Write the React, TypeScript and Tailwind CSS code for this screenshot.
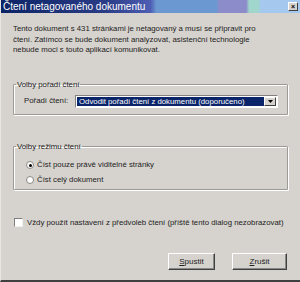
import React from "react";

const font = { fontFamily: '"Liberation Sans", "DejaVu Sans", sans-serif' };

function GroupBox({ title, children, className }: { title: string; children: React.ReactNode; className?: string }) {
  return (
    <fieldset className={"border border-[#9c9a94] shadow-[inset_1px_1px_0_#fff,1px_1px_0_#fff] rounded-[1px] mx-[12px] " + (className ?? "")}>
      <legend className="ml-[2px] px-[1px] text-[7.8px] leading-[9px] text-[#222]">{title}</legend>
      {children}
    </fieldset>
  );
}

function Radio({ checked, label }: { checked?: boolean; label: string }) {
  return (
    <div className="flex items-center gap-[3px] h-[15px]">
      <span className="w-[8px] h-[8px] rounded-full bg-white border border-[#8a8884] flex items-center justify-center">
        {checked && <span className="w-[3px] h-[3px] rounded-full bg-black" />}
      </span>
      <span className="text-[7.8px] text-[#222]">{label}</span>
    </div>
  );
}

function Button({ label }: { label: string }) {
  return (
    <button className="h-[17px] border border-t-white border-l-white border-r-[#404040] border-b-[#404040] shadow-[inset_-1px_-1px_0_#888] bg-[#d6d3ce] text-[8px] text-[#222]">
      <span className="underline">{label[0]}</span>
      {label.slice(1)}
    </button>
  );
}

export default function App() {
  return (
    <div style={font} className="w-[300px] h-[282px] bg-[#d6d3ce] flex flex-col border-l border-l-[#e8e6e2] border-b-2 border-b-[#404040] overflow-hidden">
      <div className="h-[13px] shrink-0 flex items-center justify-between pl-[2px] pr-[2px] bg-[linear-gradient(to_right,#0b2466_0%,#2a3c86_35%,#4e5eb4_50%,#6b98d0_52%,#6b98d0_72%,#8c8cca_73%,#8c8cca_82%,#a0d6cc_83%,#a0d6cc_86%,#a4c8ee_87%,#a4c8ee_100%)]">
        <span className="text-white text-[10px] leading-[12px]">Čtení netagovaného dokumentu</span>
        <span className="w-[10px] h-[9px] bg-[#d6d3ce] border border-t-white border-l-white border-r-[#404040] border-b-[#404040] flex items-center justify-center text-[7px] leading-none font-bold text-black">
          ×
        </span>
      </div>

      <p className="mt-[11px] pl-[12px] pr-[30px] text-[7.8px] leading-[10.5px] text-[#222]">
        Tento dokument s 431 stránkami je netagovaný a musí se připravit pro čtení. Zatímco se bude dokument analyzovat, asistenční technologie nebude moci s touto aplikací komunikovat.
      </p>

      <GroupBox title="Volby pořadí čtení" className="mt-[24px] h-[35px] shrink-0">
        <div className="flex items-center pl-[10px] pt-[6px]">
          <span className="w-[51px] text-[7.8px] text-[#222]">Pořadí čtení:</span>
          <div className="w-[203px] h-[13px] bg-white border border-t-[#808080] border-l-[#808080] border-r-white border-b-white flex items-stretch p-[1px]">
            <div className="flex-1 bg-[#0a246a] text-white text-[7.8px] leading-[9px] pl-[2px]">
              Odvodit pořadí čtení z dokumentu (doporučeno)
            </div>
            <div className="w-[12px] bg-[#d6d3ce] border border-t-white border-l-white border-r-[#404040] border-b-[#404040] flex items-center justify-center">
              <svg width="5" height="3" viewBox="0 0 5 3">
                <path d="M0 0h5L2.5 3z" fill="#000" />
              </svg>
            </div>
          </div>
        </div>
      </GroupBox>

      <GroupBox title="Volby režimu čtení" className="mt-[27px] h-[48px] shrink-0">
        <div className="flex flex-col pl-[12px] pt-[7px]">
          <Radio checked label="Číst pouze právě viditelné stránky" />
          <Radio label="Číst celý dokument" />
        </div>
      </GroupBox>

      <div className="flex items-center gap-[4px] pl-[13px] mt-[27px]">
        <span className="w-[9px] h-[9px] bg-white border border-t-[#808080] border-l-[#808080] border-r-[#f0f0f0] border-b-[#f0f0f0]" />
        <span className="text-[7.8px] text-[#222]">Vždy použít nastavení z předvoleb čtení (příště tento dialog nezobrazovat)</span>
      </div>

      <div className="flex justify-end gap-[17px] pr-[13px] mt-[25px]">
        <div className="w-[47px] flex flex-col">
          <Button label="Spustit" />
        </div>
        <div className="w-[55px] flex flex-col">
          <Button label="Zrušit" />
        </div>
      </div>
    </div>
  );
}
